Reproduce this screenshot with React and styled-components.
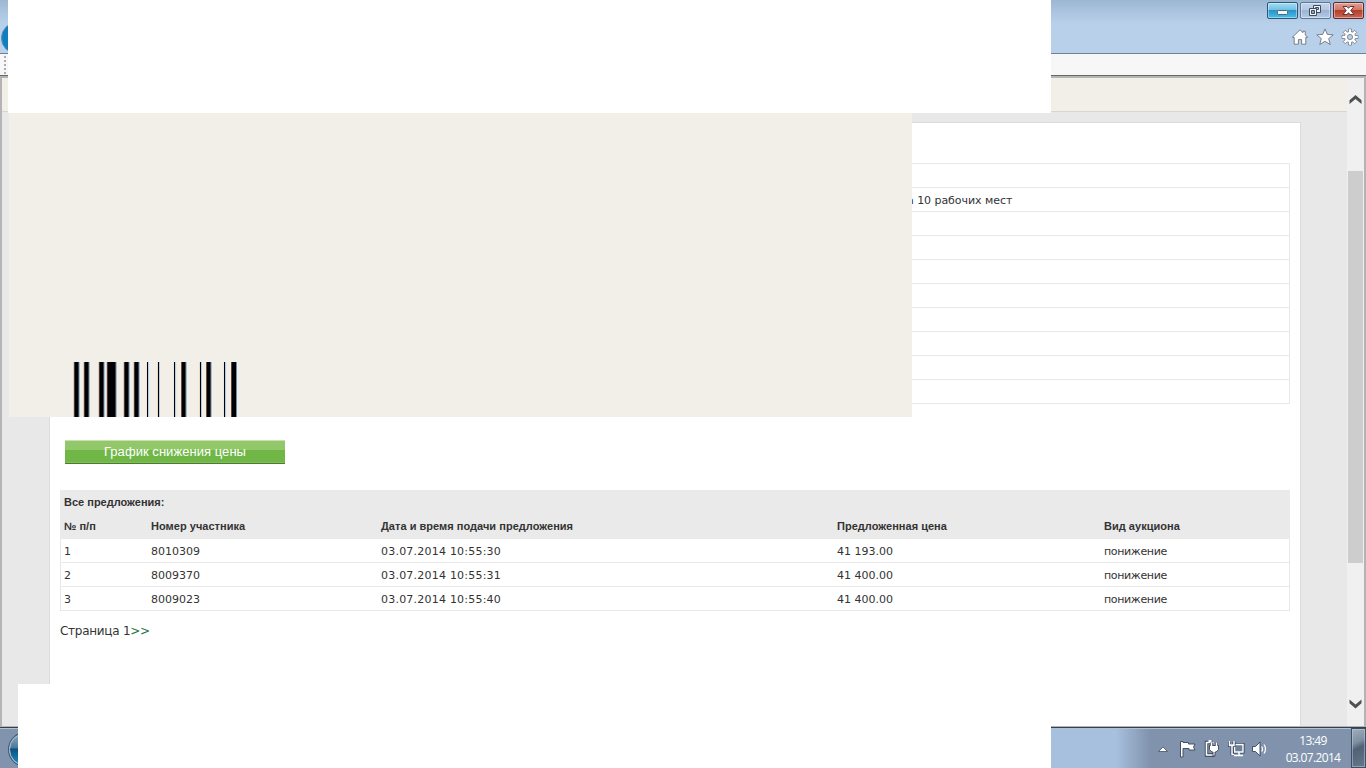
import React from 'react';
import styled, { createGlobalStyle } from 'styled-components';

const bars = [
    [24, 5], [34, 5], [49, 5], [57, 9], [74, 5], [84, 5], [97, 1.7], [107.6, 2],
    [124, 1.7], [131.3, 4.7], [149.6, 2], [156.3, 4.7], [174, 1.7], [181.2, 5.2],
];

const columns = ['№ п/п', 'Номер участника', 'Дата и время подачи предложения', 'Предложенная цена', 'Вид аукциона'];

const offers = [
    ['1', '8010309', '03.07.2014 10:55:30', '41 193.00', 'понижение'],
    ['2', '8009370', '03.07.2014 10:55:31', '41 400.00', 'понижение'],
    ['3', '8009023', '03.07.2014 10:55:40', '41 400.00', 'понижение'],
];

const details = ['', 'а 10 рабочих мест', '', '', '', '', '', '', '', ''];

function TitleBar() {
    return (
        <Title>
            <Orb $top={22} $left={1} $size={32} $flat />
            <TitleRight>
                <WindowButtons>
                    <WindowButton $kind="min">
                        <svg width="29" height="15" viewBox="0 0 29 15">
                            <rect x="9.5" y="7.5" width="10" height="4" rx="1" fill="#f4f4f4" stroke="#47697f" />
                        </svg>
                    </WindowButton>
                    <WindowButton $kind="max">
                        <svg width="29" height="15" viewBox="0 0 29 15" fill="#eef2f8" stroke="#3f4c60">
                            <path d="M12.500 2.500h7v7h-7z" />
                            <path d="M14.500 4.500h3v2h-3z" fill="#a9bdd8" />
                            <path d="M8.500 5.500h7v7h-7z" />
                            <path d="M10.500 7.500h3v3h-3z" fill="#8ea5c4" />
                        </svg>
                    </WindowButton>
                    <WindowButton $kind="close">
                        <svg width="29" height="15" viewBox="0 0 29 15">
                            <path d="M9 3.500h4l1.500 1.800L16 3.500h4l-3.200 4 3.200 4h-4l-1.500-1.800-1.500 1.800H9l3.200-4z" fill="#fff" stroke="#5d3638" />
                        </svg>
                    </WindowButton>
                </WindowButtons>
                <Tools>
                    <svg width="18" height="18" viewBox="0 0 18 18">
                        <path d="M9 1.800L1.300 9.300h1.900v6.900h4.200v-4.600h3.200v4.600h4.200V9.300h1.900L14.300 6.900V3.200h-2.300v1.500z" fill="#fff" stroke="#6d7480" strokeWidth=".9" />
                    </svg>
                    <svg width="18" height="18" viewBox="0 0 18 18">
                        <path d="M9 .9l2.300 5.500 5.900.4-4.500 3.800 1.500 5.900L9 13.300l-5.200 3.200 1.500-5.900L.8 6.800l5.900-.4z" fill="#fff" stroke="#6d7480" strokeWidth=".9" />
                    </svg>
                    <svg width="18" height="18" viewBox="0 0 18 18">
                        <g fill="#fff" stroke="#6d7480" strokeWidth=".8">
                            {[0, 45, 90, 135, 180, 225, 270, 315].map(a => (
                                <path key={a} d="M7.500 5V1h3v4" transform={`rotate(${a} 9 9)`} />
                            ))}
                            <circle cx="9" cy="9" r="5.600" />
                        </g>
                        <g stroke="#fff" strokeWidth="2.200">
                            {[0, 45, 90, 135, 180, 225, 270, 315].map(a => (
                                <path key={a} d="M9 5.500V1.500" transform={`rotate(${a} 9 9)`} />
                            ))}
                        </g>
                        <circle cx="9" cy="9" r="2.600" fill="#bad0ea" stroke="#6d7480" strokeWidth=".8" />
                    </svg>
                </Tools>
            </TitleRight>
        </Title>
    );
}

function Scroll() {
    return (
        <ScrollBar>
            <svg width="17" height="16" viewBox="0 0 17 16">
                <path d="M2.500 12V8.300L8.500 3l6 5.300V12l-6-5z" fill="#505050" />
            </svg>
            <Thumb />
            <svg width="17" height="16" viewBox="0 0 17 16">
                <path d="M2.500 3.500v3.700l6 5.300 6-5.300V3.500l-6 5z" fill="#505050" />
            </svg>
        </ScrollBar>
    );
}

function Barcode() {
    return (
        <BarcodeSvg viewBox="0 0 230 55">
            {bars.map(([x, w]) => (
                <g key={x}>
                    <rect x={x - 0.2} width=".8" height="55" fill={w > 3 ? '#8b4f22' : '#f0c99c'} />
                    <rect x={x + w - 0.5} width=".9" height="55" fill={w > 3 ? '#3f78a8' : '#a9c5ee'} />
                    <rect x={w > 3 ? x + 0.4 : Math.round(x)} width={w > 3 ? w - 0.8 : 1} height="55" fill="#000005" />
                </g>
            ))}
        </BarcodeSvg>
    );
}

function Tray() {
    return (
        <TrayIcons>
            <svg width="112" height="20" viewBox="0 0 112 20" fill="none" stroke="#fff">
                <path d="M.5 12.500h9L5 8z" fill="#fff" stroke="#435169" strokeWidth=".8" />
                {/* action centre flag */}
                <path d="M22.500 2.500h2.500v1h5.500v1.500h6.500l-1.500 3 1.500 3h-6v-1.500H25V18h-2.500z" fill="#fff" stroke="#364358" strokeWidth=".9" />
                {/* power plug */}
                <path d="M55 3.500h-6.500v12.500h8" stroke="#364358" strokeWidth="3.400" />
                <path d="M55.500 3.500h-7v12.500h7" strokeWidth="1.600" />
                <path d="M50.500 2h3" strokeWidth="2" />
                <path d="M51.500 6.500h9V10.500l-2.300 2.500h-1.200v4h-2v-4h-1.200L51.500 10.500z" fill="#fff" stroke="#364358" strokeWidth=".9" />
                <path d="M53.500 7V3.500M58.500 7V3.500" stroke="#364358" strokeWidth="3" />
                <path d="M53.500 7.500V3.500M58.500 7.500V3.500" strokeWidth="1.600" />
                {/* network */}
                <path d="M76.500 5.500h8.500v7.500H76.500z" fill="#5d6f86" stroke="#364358" strokeWidth="3.200" />
                <path d="M76.500 5.500h8.500v7.500H76.500z" fill="#6d8199" strokeWidth="1.400" />
                <path d="M76 16.500h9M81 13v3" strokeWidth="1.500" />
                <path d="M71.500 2.500v4h4.500v-4M74 7v8h2" stroke="#364358" strokeWidth="3" />
                <path d="M71.500 2v4.500h4.500V2M72 6h4M74 7v8.500h2" strokeWidth="1.500" />
                {/* speaker */}
                <path d="M94.500 7.500h3L102 3v14l-4.500-4.500h-3z" fill="#fff" stroke="#364358" strokeWidth=".9" />
                <path d="M103.700 7.500q1.700 2.500 0 5M106 5.500q3 4.500 0 9" strokeWidth="1.200" />
            </svg>
            <Clock>
                <span>13:49</span>
                <span>03.07.2014</span>
            </Clock>
        </TrayIcons>
    );
}

function App() {
    return (
        <Screen>
            <GlobalStyle />
            <TitleBar />
            <ToolStrip>
                <Grip />
            </ToolStrip>
            <Browser>
                <Page>
                    <PageTop />
                    <Sheet>
                        <Details>
                            {details.map((text, i) => <DetailRow key={i}>{text}</DetailRow>)}
                        </Details>
                        <ChartButton>График снижения цены</ChartButton>
                        <Offers>
                            <OffersHead>
                                <Caption>Все предложения:</Caption>
                                <HeadRow>
                                    {columns.map(name => <span key={name}>{name}</span>)}
                                </HeadRow>
                            </OffersHead>
                            {offers.map(([num, member, date, price, kind]) => (
                                <Row key={num}>
                                    <Cell>{num}</Cell>
                                    <Cell>{member}</Cell>
                                    <Cell $spacing=".22px">{date}</Cell>
                                    <Cell>{price}</Cell>
                                    <Cell $spacing="-.35px">{kind}</Cell>
                                </Row>
                            ))}
                        </Offers>
                        <Pager>Страница 1<a>&gt;&gt;</a></Pager>
                    </Sheet>
                </Page>
                <Scroll />
            </Browser>
            <TaskBar>
                <Orb $top={5} $left={9} $size={33} />
                <Tray />
                <ShowDesktop />
            </TaskBar>
            <TopCover />
            <BeigeCover>
                <Barcode />
            </BeigeCover>
            <BottomCover />
        </Screen>
    );
}

export default App;

const GlobalStyle = createGlobalStyle`
* {
    box-sizing: border-box;
}

body {
    margin: 0;
    overflow: hidden;
}
`

const Screen = styled.div`
    position: relative;
    display: flex;
    flex-direction: column;
    width: 1366px;
    height: 768px;
    overflow: hidden;
    background: #e8e8e8;
    color: #333;
    font: 11px/24px "DejaVu Sans", Verdana, sans-serif;
`

const Title = styled.div`
    position: relative;
    flex: none;
    display: flex;
    justify-content: flex-end;
    height: 54px;
    overflow: hidden;
    border-bottom: 1px solid #6f8098;
    background: linear-gradient(#9cb7d2, #a9c2de 10px, #b9d0ea 24px, #b9d0ea);
`

const TitleRight = styled.div`
    display: flex;
    flex-direction: column;
    align-items: flex-end;
    padding: 2px 2px 0 0;
`

const WindowButtons = styled.div`
    display: flex;
    gap: 2px;
`

const buttonFill = {
    min: 'linear-gradient(#a4dcf2, #6fc0e4 46%, #2c92c8 50%, #45bfe6)',
    max: 'linear-gradient(#c3d4ea, #b3c8e2 46%, #9bb4d3 50%, #b4cae4)',
    close: 'linear-gradient(#e0a092, #cf7565 46%, #b53d2b 50%, #cc6653)',
};

const WindowButton = styled.div`
    display: flex;
    width: 31px;
    height: 17px;
    border: 1px solid ${p => (p.$kind === 'close' ? '#5b2b30' : p.$kind === 'min' ? '#2c5878' : '#61779a')};
    border-radius: 2px;
    background: ${p => buttonFill[p.$kind]};
    box-shadow: inset 0 0 0 1px rgba(255, 255, 255, .4);
`

const Tools = styled.div`
    display: flex;
    gap: 7px;
    padding: 9px 5px 0 0;
`

const Orb = styled.div`
    position: absolute;
    top: ${p => p.$top}px;
    left: ${p => p.$left}px;
    width: ${p => p.$size}px;
    height: ${p => p.$size}px;
    border: 1px solid ${p => (p.$flat ? '#5f89b0' : '#a8c3d6')};
    border-radius: 50%;
    background: ${p => (p.$flat ? '#0f80bf' : 'linear-gradient(#8ba9c0, #4d7997 45%, #0c527f 48%, #1d8ec4)')};
    box-shadow: ${p => (p.$flat ? 'none' : '0 0 0 1px #3d5873')};
`

const ToolStrip = styled.div`
    flex: none;
    height: 22px;
    padding: 2px 4px;
    border-bottom: 1px solid #686868;
    background: #f7f7f7;
`

const Grip = styled.div`
    width: 2px;
    height: 18px;
    background: repeating-linear-gradient(#a9adb5 0 2px, transparent 2px 4px);
`

const Browser = styled.div`
    flex: none;
    display: flex;
    height: 651px;
    border: 2px solid #b4b4b4;
    border-bottom-width: 1px;
`

const Page = styled.div`
    flex: 1;
    overflow: hidden;
    background: #e8e8e8;
`

const PageTop = styled.div`
    height: 34px;
    margin-bottom: 10px;
    border-bottom: 1px solid #d8d6d2;
    background: #f2efe8;
`

const Sheet = styled.div`
    width: 1252px;
    height: 620px;
    margin-left: 47px;
    padding: 40px 10px 0;
    border: 1px solid #dcdcdc;
    background: #fff;
`

const Details = styled.div`
    border: 1px solid #e8e8e8;
    border-top: 0;
    border-bottom: 0;
    box-shadow: 0 1px #e8e8e8;
`

const DetailRow = styled.div`
    height: 24px;
    padding-left: 846px;
    border-top: 1px solid #e8e8e8;
    line-height: 25px;
    letter-spacing: -.05px;
    white-space: pre;
`

const ChartButton = styled.div`
    width: 220px;
    height: 24px;
    margin: 37px 0 26px 5px;
    border-top: 1px solid #c6e2b2;
    border-bottom: 1px solid #4b7a30;
    background: linear-gradient(#93c86a 0 9px, #70b748 9px 21px, #80c05a 21px);
    color: #fff;
    font: 13px/21px "Liberation Sans", Arial, sans-serif;
    letter-spacing: .05px;
    text-align: center;
`

const Offers = styled.div`
    border: 1px solid #e8e8e8;
    border-top: 0;
    border-bottom: 0;
`

const OffersHead = styled.div`
    margin: 0 -1px;
    padding: 0 1px;
    background: #eaeaea;
    font-family: "Liberation Sans", Arial, sans-serif;
    font-weight: bold;
`

const Caption = styled.div`
    height: 24px;
    padding-left: 3px;
`

const Row = styled.div`
    display: grid;
    grid-template-columns: 87px 230px 456px 267px 1fr;
    height: 24px;
    padding-left: 3px;
    border-bottom: 1px solid #e8e8e8;
    line-height: 25px;
`

const HeadRow = styled(Row)`
    height: 25px;
    border-bottom: 0;
    line-height: 24px;
    letter-spacing: .03px;
`

const Cell = styled.span`
    letter-spacing: ${p => p.$spacing || '0'};
`

const Pager = styled.div`
    padding-top: 8px;
    font-size: 12px;
    letter-spacing: -.27px;

    a {
        color: #1c7340;
    }
`

const ScrollBar = styled.div`
    flex: none;
    display: flex;
    flex-direction: column;
    justify-content: space-between;
    width: 17px;
    padding: 14px 0;
    background: #f0f0f0;
`

const Thumb = styled.div`
    height: 392px;
    margin: 0 1px 70px;
    background: #cdcdcd;
`

const TaskBar = styled.div`
    position: relative;
    flex: none;
    display: flex;
    justify-content: flex-end;
    height: 41px;
    overflow: hidden;
    border-top: 1px solid #35414f;
    background: linear-gradient(90deg, #8294ad 0 60px, #a6c0de 200px 1116px, #8193ac 1150px);
    box-shadow: inset 0 1px #b1c1d5;
`

const TrayIcons = styled.div`
    display: flex;
    align-items: center;
    padding-top: 2px;
`

const Clock = styled.div`
    display: flex;
    flex-direction: column;
    align-items: center;
    width: 76px;
    margin-left: 4px;
    margin-right: 1px;
    padding-left: 2px;
    color: #fff;
    font: 12px/17px "Open Sans", "Noto Sans", sans-serif;
    letter-spacing: -.65px;
`

const ShowDesktop = styled.div`
    width: 15px;
    border: 1px solid #3f4f63;
    background: linear-gradient(155deg, #a1aebb 0, #7e8fa0 35%, #4f6175 50%, #64788c);
    box-shadow: inset 0 0 0 1px rgba(200, 215, 230, .45);
`

// blank areas lying over the window
const Cover = styled.div`
    position: absolute;
    background: #fff;
`

const TopCover = styled(Cover)`
    top: 0;
    left: 8px;
    width: 1043px;
    height: 113px;
`

const BeigeCover = styled(Cover)`
    top: 113px;
    left: 9px;
    width: 903px;
    height: 304px;
    display: flex;
    align-items: flex-end;
    padding-left: 41px;
    background: #f2efe8;
`

const BottomCover = styled(Cover)`
    top: 684px;
    left: 18px;
    width: 1033px;
    height: 84px;
`

const BarcodeSvg = styled.svg`
    width: 230px;
    height: 55px;
`
